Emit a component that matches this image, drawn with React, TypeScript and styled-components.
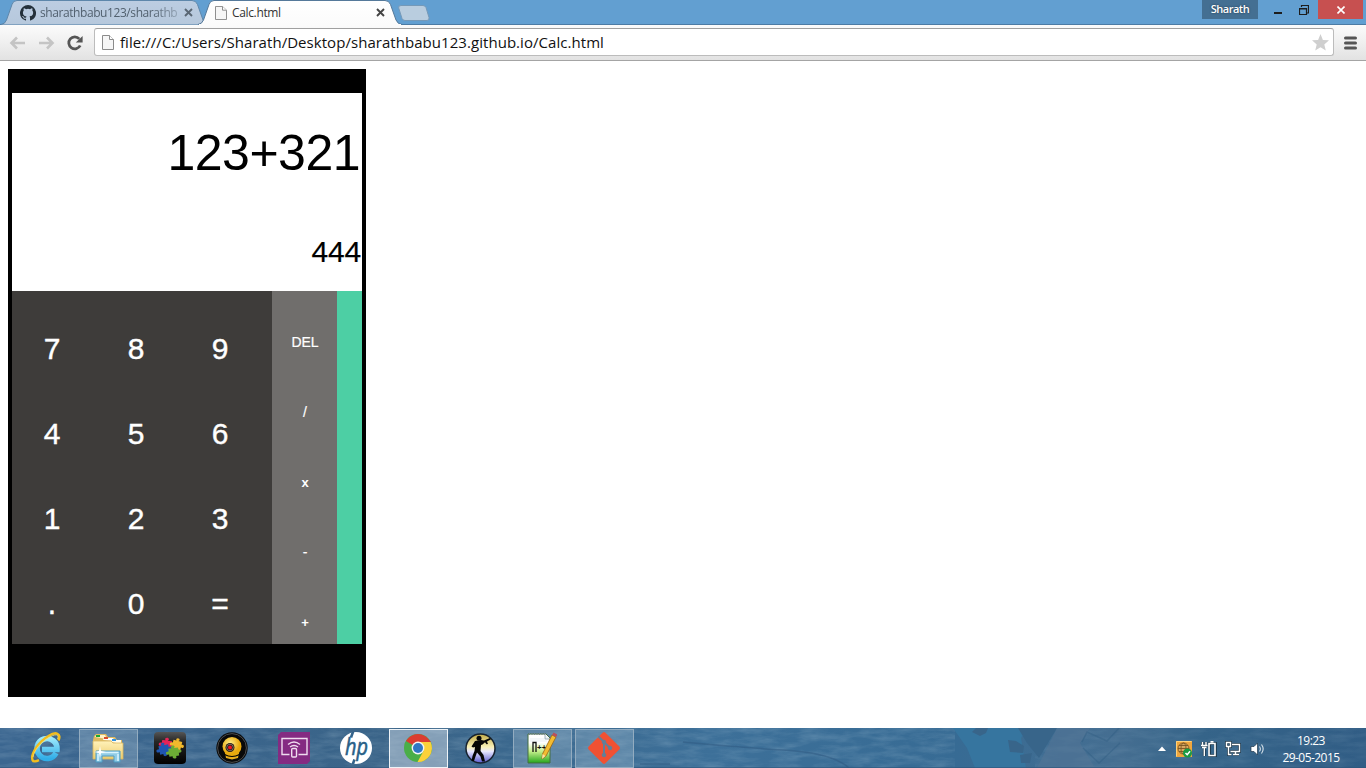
import React from "react";
import styled, { createGlobalStyle, css } from "styled-components";

const GlobalStyle = createGlobalStyle`
  html, body { margin: 0; padding: 0; background: #fff; }
  body { width: 1366px; height: 768px; overflow: hidden; }
  svg { display: block; flex: none; }
`;

const uiFont = `"Open Sans", "Noto Sans", sans-serif`;

const Screen = styled.div`
  display: flex;
  flex-direction: column;
  width: 1366px;
  height: 768px;
  overflow: hidden;
  background: #fff;
  font-family: ${uiFont};
`;

/* ---------- Browser chrome ---------- */

const TitleBar = styled.header`
  display: flex;
  align-items: flex-start;
  box-sizing: border-box;
  height: 25px;
  background: #629fd1;
  border-bottom: 1px solid #4c7ba4;
`;

const Tab = styled.div<{ $width: number; $active?: boolean }>`
  position: relative;
  display: flex;
  align-items: center;
  box-sizing: border-box;
  width: ${(p) => p.$width}px;
  height: 25px;
  padding-left: ${(p) => (p.$active ? 17 : 19)}px;
  z-index: ${(p) => (p.$active ? 2 : 1)};
  margin-left: ${(p) => (p.$active ? -11 : 1)}px;
  color: ${(p) => (p.$active ? "#333" : "#52616f")};
`;

const TabShape = styled.svg`
  position: absolute;
  left: 0;
  top: 0;
`;

const TabContent = styled.div`
  position: relative;
  display: flex;
  align-items: center;
  height: 25px;
  flex: 1;
`;

const TabTitle = styled.span<{ $faded?: boolean; $spacing: number }>`
  width: ${(p) => (p.$faded ? 138 : 137)}px;
  margin-left: ${(p) => (p.$faded ? 4 : 5)}px;
  white-space: nowrap;
  font-size: 12px;
  line-height: 18px;
  letter-spacing: ${(p) => p.$spacing}px;
  ${(p) =>
    p.$faded &&
    css`
      mask-image: linear-gradient(90deg, #000 112px, rgba(0, 0, 0, 0.35) 138px);
    `}
`;

const TabClose = styled.svg<{ $gap: number }>`
  margin-left: ${(p) => p.$gap}px;
`;

const NewTab = styled.svg`
  margin: 5px 0 0 -4px;
  z-index: 1;
`;

const WindowControls = styled.div`
  display: flex;
  align-items: flex-start;
  margin-left: auto;
`;

const UserBadge = styled.div`
  width: 56px;
  height: 19px;
  margin-right: 6px;
  background: #446f92;
  color: #fff;
  font-size: 11px;
  font-weight: 600;
  line-height: 18px;
  text-align: center;
  letter-spacing: -0.5px;
  text-shadow: 0 0 2px #1d3446;
`;

const WindowButton = styled.div<{ $width: number; $danger?: boolean }>`
  display: flex;
  align-items: center;
  justify-content: center;
  width: ${(p) => p.$width}px;
  height: 19px;
  background: ${(p) => (p.$danger ? "#c75050" : "transparent")};
`;

const Toolbar = styled.div`
  display: flex;
  align-items: center;
  box-sizing: border-box;
  height: 36px;
  padding: 0 9px 0 9px;
  background: linear-gradient(#fbfbfb, #f2f2f2 40%, #e2e2e2);
  border-bottom: 1px solid #a4a4a4;
`;

const NavIcons = styled.div`
  display: flex;
  align-items: center;
  gap: 12px;
  width: 85px;
`;

const AddressBar = styled.div`
  display: flex;
  align-items: center;
  box-sizing: border-box;
  width: 1240px;
  height: 28px;
  margin-bottom: 1px;
  padding: 0 4px 0 7px;
  border: 1px solid #bcbcbc;
  border-top: 1px solid #a0a0a0;
  border-radius: 3px;
  background: #fff;
`;

const Url = styled.span`
  flex: 1;
  margin-left: 6px;
  color: #111;
  font-size: 15px;
  line-height: 22px;
  letter-spacing: 0.05px;
  white-space: nowrap;
`;

const MenuIcon = styled.svg`
  margin-left: 10px;
`;

/* ---------- Page ---------- */

const Page = styled.main`
  box-sizing: border-box;
  flex: 1;
  padding: 8px;
`;

const Calculator = styled.section`
  box-sizing: border-box;
  width: 358px;
  height: 628px;
  padding: 24px 4px 53px;
  background: #000;
  font-family: "Liberation Sans", Arial, sans-serif;
`;

const Display = styled.div`
  display: flex;
  flex-direction: column;
  align-items: flex-end;
  box-sizing: border-box;
  height: 198px;
  padding-top: 32px;
  background: #fff;
  color: #000;
`;

const Expression = styled.div`
  padding-right: 2px;
  font-size: 50px;
  line-height: 56px;
  letter-spacing: -0.5px;
`;

const Result = styled.div`
  margin-top: 54px;
  padding-right: 1px;
  font-size: 30px;
  line-height: 34px;
  letter-spacing: -0.2px;
  -webkit-text-stroke: 0.2px #000;
`;

const Keypad = styled.div`
  display: flex;
  height: 353px;
`;

const Digits = styled.div`
  display: grid;
  grid-template-columns: repeat(3, 80px);
  grid-auto-rows: 34px;
  gap: 51px 4px;
  box-sizing: border-box;
  width: 260px;
  padding-top: 41px;
  background: #3e3c3a;
`;

const DigitKey = styled.div`
  color: #fff;
  font-size: 30px;
  line-height: 34px;
  text-align: center;
  -webkit-text-stroke: 0.4px #fff;
`;

const Operators = styled.div`
  display: flex;
  flex-direction: column;
  gap: 54px;
  box-sizing: border-box;
  width: 65px;
  padding: 43px 0 0 1px;
  background: #706e6c;
`;

const OperatorKey = styled.div<{ $bold?: boolean }>`
  color: #fff;
  font-size: ${(p) => (p.$bold ? 13 : 14)}px;
  font-weight: ${(p) => (p.$bold ? 700 : 400)};
  line-height: ${(p) => (p.$bold ? 17 : 16)}px;
  height: 16px;
  text-align: center;
  -webkit-text-stroke: ${(p) => (p.$bold ? 0 : 0.2)}px #fff;
`;

const AdvancedStrip = styled.div`
  flex: 1;
  background: #4dcfa4;
`;

/* ---------- Taskbar ---------- */

const TaskbarRoot = styled.footer`
  position: relative;
  display: flex;
  align-items: stretch;
  height: 40px;
  background: #3a6a92;
`;

const Wallpaper = styled.svg`
  position: absolute;
  left: 0;
  top: 0;
`;

const Apps = styled.div`
  position: relative;
  display: flex;
  padding-left: 15px;
`;

const AppSlot = styled.div`
  display: flex;
  align-items: center;
  justify-content: center;
  width: 62px;
  height: 40px;
`;

const AppButton = styled.div<{ $state: "idle" | "open" | "focused" }>`
  display: flex;
  align-items: center;
  justify-content: center;
  box-sizing: border-box;
  width: 59px;
  height: 39px;
  border: 1px solid transparent;
  ${(p) =>
    p.$state === "open" &&
    css`
      border-color: #93acc0;
      background: rgba(190, 210, 225, 0.27);
    `}
  ${(p) =>
    p.$state === "focused" &&
    css`
      border-color: #eef3f7;
      background: rgba(205, 218, 230, 0.5);
    `}
`;

const Tray = styled.div`
  position: relative;
  display: flex;
  align-items: center;
  margin-left: auto;
  padding: 2px 23px 0 0;
`;

const TrayIcons = styled.div`
  display: flex;
  align-items: center;
  gap: 8px;
`;

const Clock = styled.div`
  width: 64px;
  margin-left: 14px;
  color: #fff;
  font-size: 12px;
  line-height: 17px;
  letter-spacing: -0.55px;
  text-align: center;
  white-space: nowrap;
`;

/* ---------- Icons ---------- */

const PageIcon = ({ w, h }: { w: number; h: number }) => (
  <svg width={w} height={h} viewBox="0 0 12 15" preserveAspectRatio="none">
    <path d="M.5.5h7l4 4v10H.5z" fill="#f6f6f6" stroke="#8b8b8b" />
    <path d="M7.5.5v4h4" fill="#fff" stroke="#8b8b8b" />
  </svg>
);

const GithubIcon = () => (
  <svg width="16" height="16" viewBox="0 0 16 16">
    <path
      fill="#24303a"
      d="M8 0a8 8 0 0 0-2.53 15.59c.4.07.55-.17.55-.38v-1.49c-2.01.37-2.53-.49-2.69-.94-.09-.23-.48-.94-.82-1.13-.28-.15-.68-.52-.01-.53.63-.01 1.08.58 1.23.82.72 1.21 1.87.87 2.33.66.07-.52.28-.87.51-1.07-1.78-.2-3.64-.89-3.64-3.95 0-.87.31-1.59.82-2.15-.08-.2-.36-1.02.08-2.12 0 0 .67-.21 2.2.82a7.4 7.4 0 0 1 4 0c1.53-1.04 2.2-.82 2.2-.82.44 1.1.16 1.92.08 2.12.51.56.82 1.27.82 2.15 0 3.07-1.87 3.75-3.65 3.95.29.25.54.73.54 1.48v2.2c0 .21.15.46.55.38A8 8 0 0 0 8 0z"
    />
  </svg>
);

const Arrow = ({ back }: { back?: boolean }) => (
  <svg width="17" height="14" viewBox="0 0 17 14">
    <path
      d={back ? "M16 7H3M8 1.5 2.5 7 8 12.5" : "M1 7h13M9 1.5 14.5 7 9 12.5"}
      fill="none"
      stroke="#c4c4c4"
      strokeWidth="2.6"
    />
  </svg>
);

const ReloadIcon = () => (
  <svg width="16" height="16" viewBox="0 0 16 16">
    <path d="M13.200 10.500A6 6 0 1 1 12.300 3.900" fill="none" stroke="#555" strokeWidth="2.8" />
    <path d="M15.600 1v6.500H8.800z" fill="#555" />
  </svg>
);

const IeIcon = () => (
  <svg width="32" height="34" viewBox="0 0 32 34">
    <defs>
      <linearGradient id="ie" x1="0" y1="0" x2="0" y2="1">
        <stop offset="0" stopColor="#9be8fb" />
        <stop offset="1" stopColor="#31aee8" />
      </linearGradient>
    </defs>
    <path
      d="M26 22A10 10 0 1 1 27 18.500H12"
      fill="none"
      stroke="url(#ie)"
      strokeWidth="5.600"
    />
    <path
      d="M28.500 9.500C31.500 2.500 26 0 18.500 5 8 11 .5 23.500 2.500 29c.7 2 3.500 1.600 6.500.2"
      fill="none"
      stroke="#f3bd1d"
      strokeWidth="2.400"
    />
    <path d="M27.500 8c2-5-2-5.500-8-1.700C10 11.500 4 20 3 26" fill="none" stroke="#ffe36a" strokeWidth=".8" />
  </svg>
);

const ExplorerIcon = () => (
  <svg width="34" height="32" viewBox="0 0 34 32">
    <defs>
      <linearGradient id="folder" x1="0" y1="0" x2="0" y2="1">
        <stop offset="0" stopColor="#fff2ba" />
        <stop offset="1" stopColor="#eccb6c" />
      </linearGradient>
    </defs>
    <path d="M3 4l2-2h10l2 3h7l2 3h5v19H2V8z" fill="#dfb961" />
    <path d="M4 5l1-2h9l2 4z" fill="#fff3c8" />
    <path d="M12 8l1-2h9l2 3z" fill="#fff" />
    <path d="M20 10l1-2h9v4z" fill="#fffbe8" />
    <path d="M5 3h4v2H5z" fill="#1aa834" />
    <path d="M13 5h4v2h-4z" fill="#d84a2e" />
    <path d="M21 7h4v2h-4z" fill="#3394e2" />
    <path d="M2 9h18l2 2h10v16H2z" fill="url(#folder)" stroke="#d9b760" strokeWidth=".8" />
    <path d="M5 30V19h24v11h-6v-6H11v6z" fill="#91cce5" stroke="#4e9cc3" strokeWidth="1" />
    <path d="M6.500 20.500h21M7 22v7M27 22v7" stroke="#d8f4ff" strokeWidth="1.500" />
    <path d="m9 14 1 5 5 1-5 1-1 5-1-5-5-1 5-1z" fill="#fff" />
  </svg>
);

const puzzle =
  "M0 2h3C1-1 6-2 6 1l-1 1h4v3c3-2 4 4 0 3v3H6c2 3-4 4-3 0H0V8c-3 2-4-4 0-3z";

const PuzzleIcon = () => (
  <svg width="32" height="32" viewBox="0 0 32 32">
    <defs>
      <linearGradient id="tile" x1="0" y1="0" x2="0" y2="1">
        <stop offset="0" stopColor="#555" />
        <stop offset=".3" stopColor="#262626" />
        <stop offset="1" stopColor="#000" />
      </linearGradient>
    </defs>
    <rect width="32" height="32" rx="4" fill="url(#tile)" />
    <path transform="translate(8.5 6) rotate(8) scale(1.1 .95)" d={puzzle} fill="#e62358" />
    <path transform="translate(20 6) rotate(14) scale(1 .95)" d={puzzle} fill="#f2b92c" />
    <path transform="translate(4 12.500) rotate(-12) scale(1.1 .95)" d={puzzle} fill="#2056b2" />
    <path transform="translate(14 15) rotate(-8) scale(1.1 .9)" d={puzzle} fill="#6dac35" />
  </svg>
);

const WebcamIcon = () => (
  <svg width="32" height="32" viewBox="0 0 32 32">
    <defs>
      <radialGradient id="cam" cx=".4" cy=".35">
        <stop offset="0" stopColor="#fff08c" />
        <stop offset="1" stopColor="#e9a90d" />
      </radialGradient>
    </defs>
    <circle cx="16" cy="16" r="15.700" fill="#090909" />
    <circle cx="16" cy="16" r="14.400" fill="none" stroke="#4c4c4c" strokeWidth="1" />
    <path d="M9 21h14l-1 5-6 1.500L10 26z" fill="#e9ae1c" />
    <circle cx="16" cy="14.500" r="9.500" fill="url(#cam)" />
    <circle cx="14" cy="15.500" r="4.500" fill="#241a14" />
    <circle cx="14" cy="15.500" r="3.300" fill="none" stroke="#9f8c83" strokeWidth=".7" />
    <circle cx="14" cy="15.500" r="2" fill="#ef1422" />
    <path d="M8.500 22.500q7.500 4 15 0" fill="none" stroke="#000" strokeWidth="1.200" />
  </svg>
);

const ConnectIcon = () => (
  <svg width="32" height="32" viewBox="0 0 32 32">
    <path d="M3 0h29v29l-3 3H0V3z" fill="#842b82" />
    <g fill="none" stroke="#efdcef" strokeWidth="1.400">
      <path d="M11.500 22.500H4V6.500h25v16h-8.500" />
      <rect x="13.700" y="16.500" width="4.800" height="8.500" rx="1" />
      <path d="M10 12.500q6-5 12 0M12 15q4-3 8 0" />
    </g>
  </svg>
);

const HpText = styled.text`
  font: italic 24px "Open Sans", sans-serif;
`;

const HpIcon = () => (
  <svg width="32" height="32" viewBox="0 0 32 32">
    <circle cx="16" cy="16" r="16" fill="#fff" />
    <path d="M13.300-1 11 5.500M14.500 27.500 12.500 33" stroke="#33638b" strokeWidth="2.600" />
    <HpText x="5" y="22.500" textLength="23" lengthAdjust="spacingAndGlyphs" fill="#285f87" stroke="#285f87" strokeWidth=".6">hp</HpText>
  </svg>
);

const ChromeIcon = () => (
  <svg width="28" height="28" viewBox="0 0 28 28">
    <circle cx="14" cy="14" r="14" fill="#4aae48" />
    <path d="M14 14 1.900 7A14 14 0 0 1 26.100 7L27 8H14z" fill="#db3c30" />
    <path d="M14 8h12.600A14 14 0 0 1 13.500 28L19.500 17z" fill="#fbd139" />
    <circle cx="14" cy="14" r="6.400" fill="#f3f5f5" />
    <circle cx="14" cy="14" r="5" fill="#2f77c4" />
  </svg>
);

const CounterIcon = () => (
  <svg width="31" height="31" viewBox="0 0 31 31">
    <defs>
      <linearGradient id="cs" x1="0" y1="0" x2="0" y2="1">
        <stop offset="0" stopColor="#c2aa45" />
        <stop offset=".45" stopColor="#f8f0b8" />
        <stop offset=".6" stopColor="#e7e7ff" />
        <stop offset="1" stopColor="#5a5ad0" />
      </linearGradient>
    </defs>
    <circle cx="15.500" cy="15.500" r="14.500" fill="url(#cs)" stroke="#17222e" strokeWidth="1.500" />
    <circle cx="14" cy="5.300" r="2.500" fill="#050505" />
    <path d="M10 8l6-1 3 .5 6-2.500 1 1.200-4 2.300 1 2.500-1.500.3-1.500-2-2.500 2.200-1.500.5-.5 6 3 4 1.500 6.500h-3l-1.500-5-3.500-4-1.500 4L9 28H6.500l1-5 2-5 .5-4-2 .5-1.500-1z" fill="#050505" />
  </svg>
);

const NppText = styled.text`
  font: bold 8px "Liberation Sans", sans-serif;
`;

const NppIcon = () => (
  <svg width="30" height="32" viewBox="0 0 30 32">
    <defs>
      <linearGradient id="npp" x1="0" y1="0" x2="0" y2="1">
        <stop offset=".3" stopColor="#fff" />
        <stop offset=".6" stopColor="#c4ee8b" />
        <stop offset="1" stopColor="#25a51c" />
      </linearGradient>
    </defs>
    <path d="M1 2h18l4 4v25H1z" fill="url(#npp)" stroke="#446c43" strokeWidth="1" />
    <path d="M2 2h17" stroke="#75838a" strokeWidth="2" strokeDasharray="1 1.500" />
    <path d="M18 2v5h5" fill="#edf2f5" stroke="#8ba1aa" strokeWidth=".8" />
    <path d="M3 7h15M3 9h17" stroke="#d8e3e9" strokeWidth=".6" />
    <path d="M6 20v-9.500h3V20" fill="none" stroke="#111" strokeWidth="1.300" />
    <NppText x="10" y="17.500" fill="#111">++</NppText>
    <path d="m25 3 4 2-10 19-4 3 .5-5z" fill="#f3bc31" stroke="#9b6414" strokeWidth=".8" />
    <path d="m25 3 1.500-2.500 4 2L29 5z" fill="#b8505c" />
    <path d="m15.500 22 3 2-3.500 3z" fill="#fae3a1" />
  </svg>
);

const GitIcon = () => (
  <svg width="32" height="32" viewBox="0 0 32 32">
    <path d="M14.600.7q1.400-1.300 2.800 0L31.300 14.600q1.300 1.400 0 2.800L17.400 31.300q-1.400 1.300-2.800 0L.7 17.400q-1.300-1.400 0-2.800z" fill="#f05133" />
    <g fill="#627f98" stroke="#627f98">
      <path d="M10.500 4.500 22 16M16 10v13" fill="none" strokeWidth="2" />
      <circle cx="16" cy="10" r="1.800" />
      <circle cx="22" cy="16" r="1.800" />
      <circle cx="16" cy="23" r="1.800" />
    </g>
  </svg>
);

const GlobeTrayIcon = () => (
  <svg width="17" height="17" viewBox="0 0 17 17">
    <rect width="16" height="16" fill="#f0a63d" />
    <path d="M.5 15.500V.5h15" fill="none" stroke="#ffd27b" />
    <circle cx="7.500" cy="7.500" r="5.500" fill="#d9a860" />
    <g fill="none" stroke="#7b5623" strokeWidth=".9">
      <circle cx="7.500" cy="7.500" r="5.500" />
      <ellipse cx="7.500" cy="7.500" rx="2.500" ry="5.500" />
      <path d="M2 7.500h11M3 4.500h9M3 10.500h9" />
    </g>
    <circle cx="11.500" cy="12" r="4.500" fill="#1b9b43" />
    <path d="m9.500 12 1.700 1.700 2.800-3.500" fill="none" stroke="#fff" strokeWidth="1.500" />
  </svg>
);

const BatteryIcon = () => (
  <svg width="16" height="18" viewBox="0 0 16 18">
    <g fill="none" stroke="#20384a" strokeWidth="2.800">
      <path d="M8.500 3.500h6v12h-6zM1.500 2v4M5 2v4M0 6h6.500M3.300 7v9" />
    </g>
    <path d="M8 3.500h6v12H8zM9.500 1.700h3" fill="none" stroke="#fff" strokeWidth="1.600" />
    <path d="M1.500 2v4M5 2v4M0 5.500h6.500M1 7.500h4.500M3.300 7v9" fill="none" stroke="#fff" strokeWidth="1.400" />
  </svg>
);

const NetworkIcon = () => (
  <svg width="17" height="16" viewBox="0 0 17 16">
    <g fill="none" stroke="#20384a" strokeWidth="2.800">
      <path d="M7 3.500h7.500v7H5.500M8 13.500h6M1.500 1.500h4v4h-4zM3.500 6v7.500h3" />
    </g>
    <path d="M7 3.500h7.500v7H5.500M8 13.500h6M10.500 11v3M1.500 1.500h4v4h-4zM3.500 6v7.500h3" fill="none" stroke="#fff" strokeWidth="1.400" />
  </svg>
);

const VolumeIcon = () => (
  <svg width="15" height="16" viewBox="0 0 15 16">
    <path d="M1 5.500h3L7.500 2v12L4 10.500H1z" fill="#fff" stroke="#20384a" strokeWidth=".7" />
    <path d="M9.500 5.500q1.700 2.500 0 5M11.500 3.500q3.300 4.500 0 9" fill="none" stroke="#d9e4ec" strokeWidth="1.100" />
  </svg>
);

/* ---------- Data ---------- */

const digits = ["7", "8", "9", "4", "5", "6", "1", "2", "3", ".", "0", "="];
const operators = ["DEL", "/", "x", "-", "+"];

type AppEntry = { name: string; state: "idle" | "open" | "focused"; Icon: React.FC };

const apps: AppEntry[] = [
  { name: "ie", state: "idle", Icon: IeIcon },
  { name: "explorer", state: "open", Icon: ExplorerIcon },
  { name: "puzzle", state: "idle", Icon: PuzzleIcon },
  { name: "webcam", state: "idle", Icon: WebcamIcon },
  { name: "connect", state: "idle", Icon: ConnectIcon },
  { name: "hp", state: "idle", Icon: HpIcon },
  { name: "chrome", state: "focused", Icon: ChromeIcon },
  { name: "counter", state: "idle", Icon: CounterIcon },
  { name: "npp", state: "open", Icon: NppIcon },
  { name: "git", state: "open", Icon: GitIcon },
];

const BrowserTab = ({
  title,
  icon,
  active,
  spacing,
}: {
  title: string;
  icon: React.ReactNode;
  active?: boolean;
  spacing: number;
}) => {
  const w = active ? 204 : 208;
  const r = w - 1;
  const outline = `M0 24.500Q4 24 5.500 20L11 4.500Q12 .5 16 .5H${r - 16}Q${r - 12} .5 ${r - 10.5} 4.500L${r - 5} 20Q${r - 3} 24.500 ${r + 1} 24.500`;
  const fillId = active ? "tab-on" : "tab-off";
  return (
    <Tab $width={w} $active={active}>
      <TabShape width={w} height="25">
        <defs>
          <linearGradient id={fillId} x1="0" y1="0" x2="0" y2="1">
            <stop offset="0" stopColor={active ? "#fff" : "#bccde2"} />
            <stop offset="1" stopColor={active ? "#fbfbfb" : "#b6c8dc"} />
          </linearGradient>
        </defs>
        <path d={outline} fill={`url(#${fillId})`} stroke={active ? "#55799a" : "#5e87ab"} />
        {active && <path d={`M1 24.500h${w - 2}`} stroke="#fbfbfb" />}
      </TabShape>
      <TabContent>
        {icon}
        <TabTitle $faded={!active} $spacing={spacing}>{title}</TabTitle>
        <TabClose $gap={active ? 7 : 6} width="9" height="9" viewBox="0 0 9 9">
          <path d="m1 1 7 7M8 1 1 8" stroke={active ? "#444" : "#596673"} strokeWidth="1.900" />
        </TabClose>
      </TabContent>
    </Tab>
  );
};

const TaskbarBackdrop = () => (
  <Wallpaper width="1366" height="40" viewBox="0 0 1366 40">
    <defs>
      <linearGradient id="wall">
        <stop offset="0" stopColor="#3b6690" />
        <stop offset=".3" stopColor="#3a6488" />
        <stop offset=".52" stopColor="#3d7099" />
        <stop offset=".7" stopColor="#376b94" />
        <stop offset=".82" stopColor="#456e91" />
        <stop offset=".88" stopColor="#356489" />
        <stop offset="1" stopColor="#315d85" />
      </linearGradient>
      <filter id="rock" x="0" y="0" width="100%" height="100%">
        <feTurbulence type="fractalNoise" baseFrequency=".04 .16" numOctaves="4" seed="8" />
        <feColorMatrix values="0 0 0 0 .55  0 0 0 0 .7  0 0 0 0 .8  .9 0 0 0 -.32" />
      </filter>
    </defs>
    <rect width="1366" height="40" fill="url(#wall)" />
    <rect width="955" height="40" filter="url(#rock)" opacity=".4" />
    <rect x="1035" width="331" height="40" filter="url(#rock)" opacity=".22" />
    <path d="M953 0h76l-8 10 5 30h-51l-8-20z" fill="#36759f" />
    <path d="m972 4 4-4h12l-2 5-6 3zM1008 12l8 1 8 5-1 7-13-1zM1020 27l12-2-2 10h-9zM1018 0h39l-18 30-12-15z" fill="#38658a" />
    <path d="m1057 0-20 40h58l-15-25 10-15z" fill="#547596" opacity=".55" />
    <path d="m1082 14 5-10 20 9 12-13M1083 20l16 15 21-20" fill="none" stroke="#2c587d" strokeWidth="1.500" opacity=".35" />
    <path d="M683 14q50 5 100 8t66 18M640 36h30" fill="none" stroke="#2d5880" strokeWidth="1.500" opacity=".5" />
    <path d="M0 39.500h1366" stroke="#2e557b" opacity=".6" />
  </Wallpaper>
);

export default function App() {
  return (
    <Screen>
      <GlobalStyle />
      <TitleBar>
        <BrowserTab title="sharathbabu123/sharathb" icon={<GithubIcon />} spacing={-0.42} />
        <BrowserTab title="Calc.html" icon={<PageIcon w={12} h={14} />} active spacing={-0.35} />
        <NewTab width="32" height="16" viewBox="0 0 32 16">
          <path d="M3 .5h22q2 0 3 2l3 10q.5 3-2 3H7q-2 0-3-2L.7 3Q0 .5 3 .5z" fill="#b9cddf" stroke="#7599b8" />
        </NewTab>
        <WindowControls>
          <UserBadge>Sharath</UserBadge>
          <WindowButton $width={28}>
            <svg width="8" height="9"><path d="M0 8h8" stroke="#1d1d1d" strokeWidth="2" /></svg>
          </WindowButton>
          <WindowButton $width={24}>
            <svg width="10" height="10"><path d="M.5 3.500h7v6h-7zM.5 4h7M2.500 2V.5h7V8H8" fill="none" stroke="#1d1d1d" strokeWidth="1.200" /></svg>
          </WindowButton>
          <svg width="2" height="19" />
          <WindowButton $width={45} $danger>
            <svg width="8" height="8"><path d="m.5.5 7 7M7.500.5l-7 7" stroke="#fff" strokeWidth="1.600" /></svg>
          </WindowButton>
          <svg width="3" height="19" />
        </WindowControls>
      </TitleBar>
      <Toolbar>
        <NavIcons>
          <Arrow back />
          <Arrow />
          <ReloadIcon />
        </NavIcons>
        <AddressBar>
          <PageIcon w={12} h={15} />
          <Url>file:///C:/Users/Sharath/Desktop/sharathbabu123.github.io/Calc.html</Url>
          <svg width="17" height="17" viewBox="0 0 17 17">
            <path d="m8.500 0 2.400 5.900 6.100.4-4.700 4.100 1.500 6.200-5.300-3.400-5.300 3.400 1.500-6.200L0 6.300l6.100-.4z" fill="#cfcfcf" />
          </svg>
        </AddressBar>
        <MenuIcon width="13" height="14" viewBox="0 0 13 14">
          <path d="M1.500 2h10M1.500 7h10M1.500 12h10" stroke="#555" strokeWidth="3" strokeLinecap="round" />
        </MenuIcon>
      </Toolbar>
      <Page>
        <Calculator>
          <Display>
            <Expression>123+321</Expression>
            <Result>444</Result>
          </Display>
          <Keypad>
            <Digits>
              {digits.map((d) => <DigitKey key={d}>{d}</DigitKey>)}
            </Digits>
            <Operators>
              {operators.map((o) => <OperatorKey key={o} $bold={o === "x" || o === "+"}>{o}</OperatorKey>)}
            </Operators>
            <AdvancedStrip />
          </Keypad>
        </Calculator>
      </Page>
      <TaskbarRoot>
        <TaskbarBackdrop />
        <Apps>
          {apps.map(({ name, state, Icon }) => (
            <AppSlot key={name}>
              <AppButton $state={state}><Icon /></AppButton>
            </AppSlot>
          ))}
        </Apps>
        <Tray>
          <TrayIcons>
            <svg width="12" height="6" viewBox="0 0 12 6"><path d="M2 5 6 .5 10 5z" fill="#fff" /></svg>
            <GlobeTrayIcon />
            <BatteryIcon />
            <NetworkIcon />
            <VolumeIcon />
          </TrayIcons>
          <Clock>
            <div>19:23</div>
            <div>29-05-2015</div>
          </Clock>
        </Tray>
      </TaskbarRoot>
    </Screen>
  );
}
